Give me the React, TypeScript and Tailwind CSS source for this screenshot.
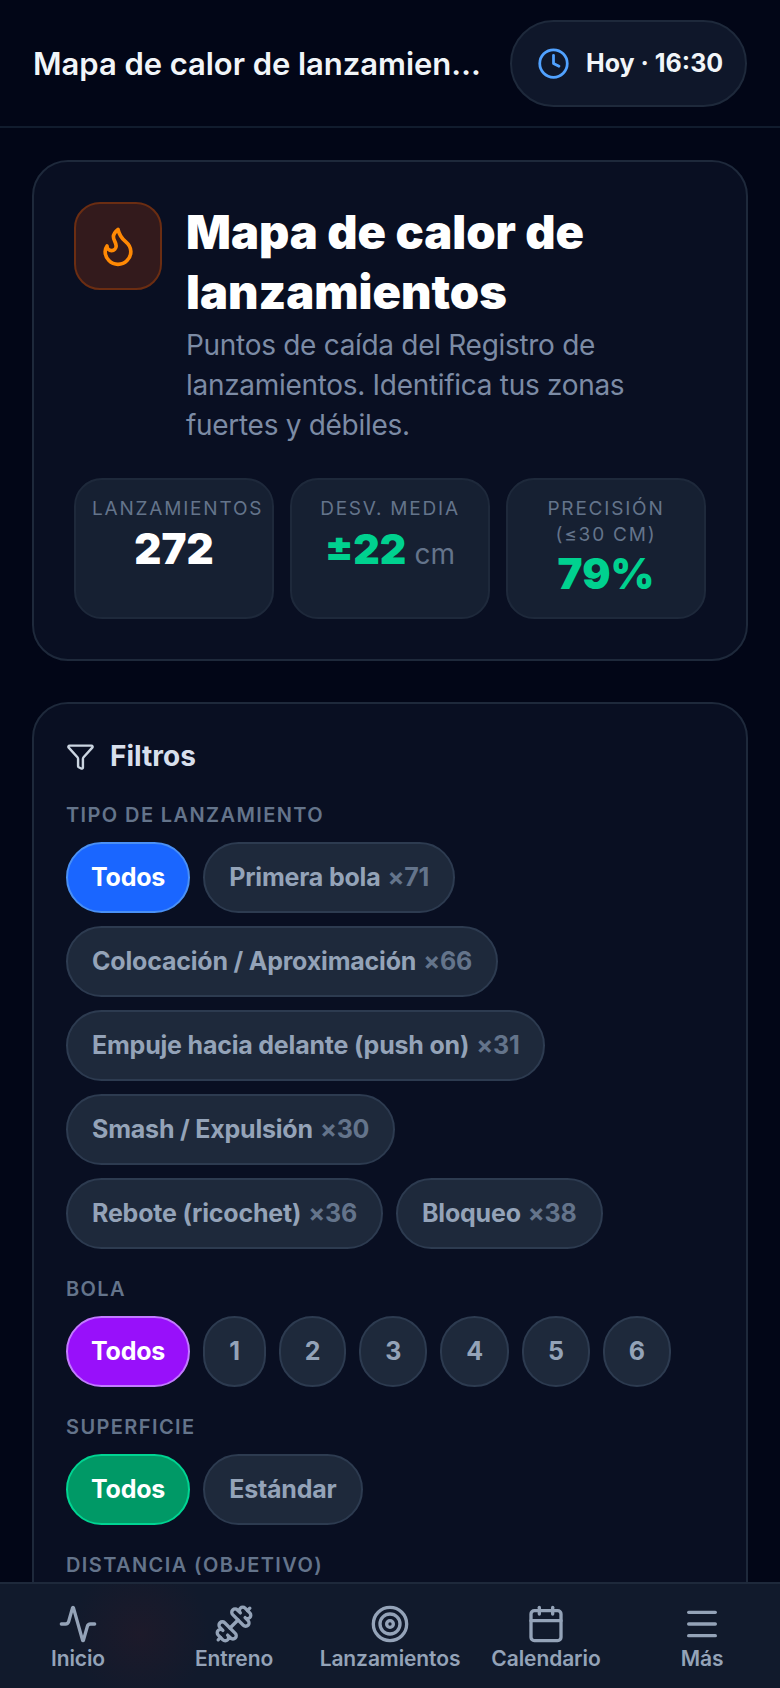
import type { ReactNode } from "react";
import { Activity, Calendar, Clock, Dumbbell, Flame, Funnel, Menu, Target } from "lucide-react";

function Chip({ label, n, active }: { label: string; n?: number; active?: string }) {
  return (
    <div
      className={
        "h-[71px] rounded-full border-2 flex items-center text-[25px] tracking-[-0.2px] font-bold whitespace-nowrap " +
        (active ? "px-[23px] " + active : "px-[24px] bg-[#1e293b] border-[#2d3b50] text-[#94a3b8]")
      }
    >
      <span>{label}</span>
      {n !== undefined && <span className="ml-[7px] text-[#64748b]">×{n}</span>}
    </div>
  );
}

function Label({ children, className = "" }: { children: string; className?: string }) {
  return (
    <div className={"text-[20px] leading-[30px] font-semibold tracking-[1.4px] text-[#64748b] uppercase " + className}>
      {children}
    </div>
  );
}

function Stat({ label, children }: { label: ReactNode; children: ReactNode }) {
  return (
    <div className="flex-1 min-w-0 h-[141px] rounded-[28px] border-2 border-[#1e293b] bg-[#162032] pt-[16px] px-[16px] text-center">
      <div className="text-[19px] leading-[26px] tracking-[1.8px] text-[#64748b] uppercase whitespace-nowrap">{label}</div>
      {children}
    </div>
  );
}

function NavItem({ icon, label }: { icon: ReactNode; label: string }) {
  return (
    <div className="flex flex-1 flex-col items-center text-[#94a3b8]">
      {icon}
      <span className="text-[21px] leading-[26px] tracking-[-0.1px] font-semibold mt-[2px] whitespace-nowrap">{label}</span>
    </div>
  );
}

export default function App() {
  return (
    <div className="w-[780px] h-[1688px] overflow-hidden flex flex-col bg-[#020617] font-['Inter',sans-serif]">
      <header className="h-[128px] shrink-0 border-b-2 border-[#111c2e] flex items-center justify-between px-[33px]">
        <div className="w-[452px] truncate text-[31px] tracking-[-0.05px] font-semibold text-[#f1f5f9] pt-[3px]">Mapa de calor de lanzamientos</div>
        <div className="w-[237px] h-[87px] rounded-full border-2 border-[#1e293b] bg-[#0f172a] flex items-center pl-[25px] gap-[16px]">
          <Clock size={33} strokeWidth={2} className="text-[#51a2ff]" />
          <span className="text-[25px] font-bold text-[#f1f5f9] whitespace-nowrap mt-[1px]">Hoy · 16:30</span>
        </div>
      </header>

      <main className="flex-1 min-h-0 overflow-hidden px-[32px] pt-[32px] flex flex-col gap-[41px]">
        <section className="shrink-0 h-[501px] rounded-[36px] border-2 border-[#1e293b] bg-[#090f22] px-[40px] pt-[40px]">
          <div className="flex gap-[24px]">
            <div className="w-[88px] h-[88px] shrink-0 rounded-[26px] border-2 border-[#6b2d12] bg-[#331a1c] flex items-center justify-center">
              <Flame size={44} strokeWidth={2} className="text-[#ff8904]" />
            </div>
            <div className="min-w-0">
              <h1 className="text-[47px] leading-[60px] font-black text-white">Mapa de calor de lanzamientos</h1>
              <p className="text-[28px] leading-[40px] tracking-[-0.3px] text-[#7c8ba5] mt-[3px]">
                Puntos de caída del Registro de lanzamientos. Identifica tus zonas fuertes y débiles.
              </p>
            </div>
          </div>
          <div className="flex gap-[16px] mt-[33px]">
            <Stat label="Lanzamientos">
              <div className="text-[42px] leading-[46px] font-black text-white mt-[4px]">272</div>
            </Stat>
            <Stat label="Desv. media">
              <div className="text-[41px] leading-[46px] font-black text-[#00d18f] mt-[4px] whitespace-nowrap">
                ±22 <span className="text-[28px] font-normal text-[#64748b]">cm</span>
              </div>
            </Stat>
            <Stat label={<>Precisión<br />(≤30 cm)</>}>
              <div className="text-[42px] leading-[46px] font-black text-[#00d18f] mt-[3px]">79%</div>
            </Stat>
          </div>
        </section>

        <section className="shrink-0 rounded-[36px] border-2 border-[#1e293b] bg-[#090f22] px-[32px] pt-[34px] pb-[40px]">
          <div className="flex items-center gap-[15px] h-[36px]">
            <Funnel size={29} strokeWidth={2} className="text-[#cbd5e1]" />
            <span className="text-[28px] font-bold text-[#d8dfec]">Filtros</span>
          </div>
          <Label className="mt-[26px]">Tipo de lanzamiento</Label>
          <div className="flex flex-wrap gap-[13px] mt-[12px]">
            <Chip label="Todos" active="bg-[#1a66ff] border-[#4a90f5] text-white" />
            <Chip label="Primera bola" n={71} />
            <Chip label="Colocación / Aproximación" n={66} />
            <Chip label="Empuje hacia delante (push on)" n={31} />
            <Chip label="Smash / Expulsión" n={30} />
            <Chip label="Rebote (ricochet)" n={36} />
            <Chip label="Bloqueo" n={38} />
          </div>
          <Label className="mt-[25px]">Bola</Label>
          <div className="flex gap-[13px] mt-[12px]">
            <Chip label="Todos" active="bg-[#9810fa] border-[#c27aff] text-white" />
            {["1", "2", "3", "4", "5", "6"].map((n) => (
              <Chip key={n} label={n} />
            ))}
          </div>
          <Label className="mt-[25px]">Superficie</Label>
          <div className="flex gap-[13px] mt-[12px]">
            <Chip label="Todos" active="bg-[#009966] border-[#00d492] text-white" />
            <Chip label="Estándar" />
          </div>
          <Label className="mt-[25px]">Distancia (objetivo)</Label>
        </section>
      </main>

      <nav className="h-[106px] shrink-0 border-t-2 border-[#1e293b] bg-[#111a2c] bg-[radial-gradient(circle_at_140px_50px,rgba(70,25,35,0.22),transparent_70px)] flex pt-[20px]">
        <NavItem icon={<Activity size={40} strokeWidth={2} />} label="Inicio" />
        <NavItem icon={<Dumbbell size={40} strokeWidth={2} />} label="Entreno" />
        <NavItem icon={<Target size={40} strokeWidth={2} />} label="Lanzamientos" />
        <NavItem icon={<Calendar size={40} strokeWidth={2} />} label="Calendario" />
        <NavItem icon={<Menu size={40} strokeWidth={2} />} label="Más" />
      </nav>
    </div>
  );
}
